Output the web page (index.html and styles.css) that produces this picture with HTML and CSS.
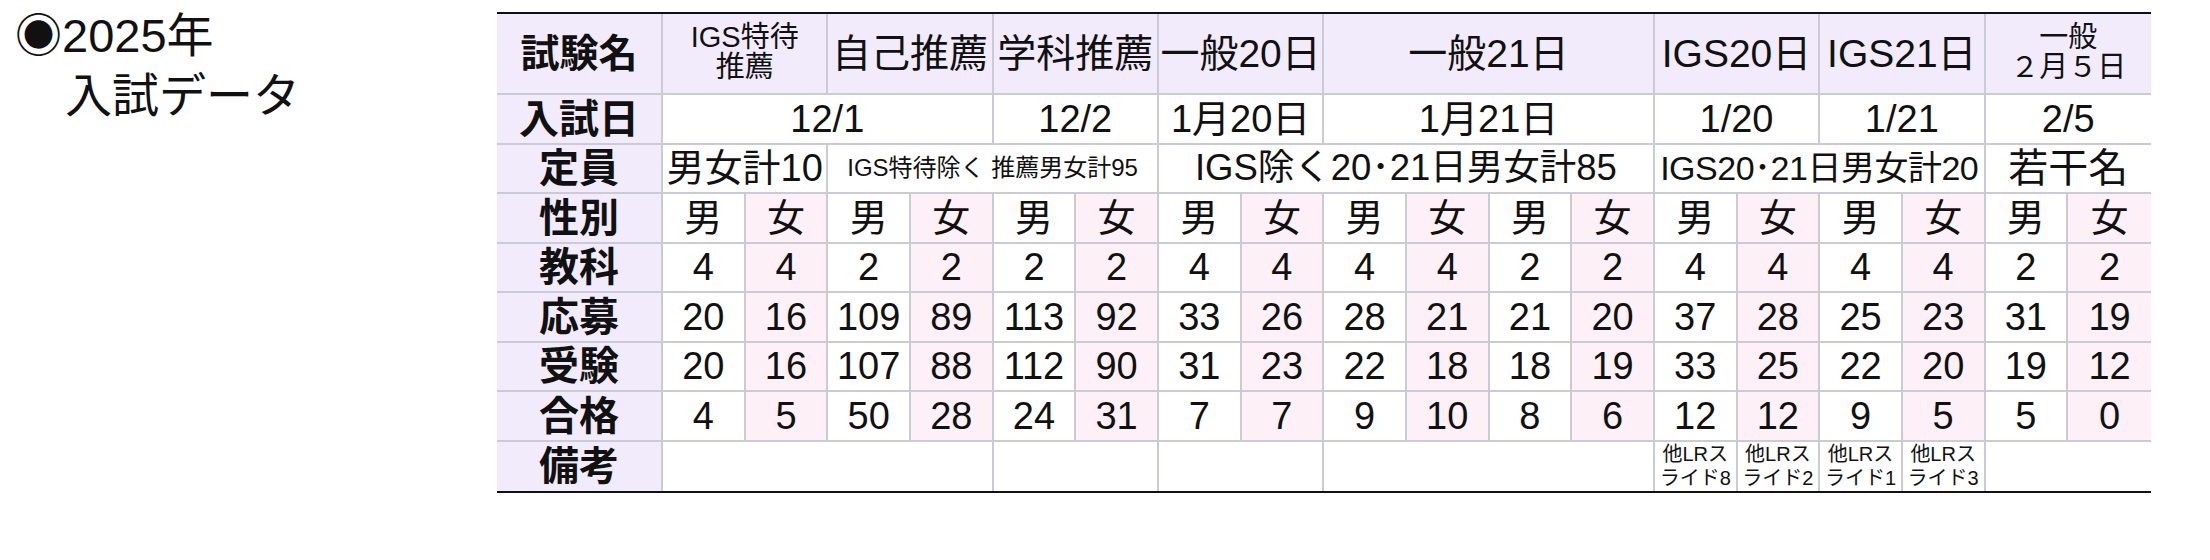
FILE: index.html
```html
<!DOCTYPE html>
<html lang="ja">
<head>
<meta charset="utf-8">
<title>2025年 入試データ</title>
<link rel="stylesheet" href="styles.css">
</head>
<body>
<div class="page">
  <div class="title">
    <div class="t1"><span class="mark">◉</span>2025年</div>
    <div class="t2">入試データ</div>
  </div>
  <table class="data">
    <colgroup>
      <col class="c-label">
      <col><col><col><col><col><col><col><col><col>
      <col><col><col><col><col><col><col><col><col>
    </colgroup>
    <tr class="hd">
      <th class="lb">試験名</th>
      <th colspan="2" class="sm">IGS特待<br>推薦</th>
      <th colspan="2">自己推薦</th>
      <th colspan="2">学科推薦</th>
      <th colspan="2">一般20日</th>
      <th colspan="4">一般21日</th>
      <th colspan="2">IGS20日</th>
      <th colspan="2">IGS21日</th>
      <th colspan="2" class="sm">一般<br>２月５日</th>
    </tr>
    <tr>
      <th class="lb">入試日</th>
      <td colspan="4">12/1</td>
      <td colspan="2">12/2</td>
      <td colspan="2">1月20日</td>
      <td colspan="4">1月21日</td>
      <td colspan="2">1/20</td>
      <td colspan="2">1/21</td>
      <td colspan="2">2/5</td>
    </tr>
    <tr>
      <th class="lb">定員</th>
      <td colspan="2">男女計10</td>
      <td colspan="4" class="tiny">IGS特待除く 推薦男女計95</td>
      <td colspan="6" class="nar1">IGS除く20･21日男女計85</td>
      <td colspan="4" class="nar2">IGS20･21日男女計20</td>
      <td colspan="2" class="wide">若干名</td>
    </tr>
    <tr>
      <th class="lb">性別</th>
      <td>男</td><td class="f">女</td><td>男</td><td class="f">女</td><td>男</td><td class="f">女</td>
      <td>男</td><td class="f">女</td><td>男</td><td class="f">女</td><td>男</td><td class="f">女</td>
      <td>男</td><td class="f">女</td><td>男</td><td class="f">女</td><td>男</td><td class="f">女</td>
    </tr>
    <tr>
      <th class="lb">教科</th>
      <td>4</td><td class="f">4</td><td>2</td><td class="f">2</td><td>2</td><td class="f">2</td>
      <td>4</td><td class="f">4</td><td>4</td><td class="f">4</td><td>2</td><td class="f">2</td>
      <td>4</td><td class="f">4</td><td>4</td><td class="f">4</td><td>2</td><td class="f">2</td>
    </tr>
    <tr>
      <th class="lb">応募</th>
      <td>20</td><td class="f">16</td><td>109</td><td class="f">89</td><td>113</td><td class="f">92</td>
      <td>33</td><td class="f">26</td><td>28</td><td class="f">21</td><td>21</td><td class="f">20</td>
      <td>37</td><td class="f">28</td><td>25</td><td class="f">23</td><td>31</td><td class="f">19</td>
    </tr>
    <tr>
      <th class="lb">受験</th>
      <td>20</td><td class="f">16</td><td>107</td><td class="f">88</td><td>112</td><td class="f">90</td>
      <td>31</td><td class="f">23</td><td>22</td><td class="f">18</td><td>18</td><td class="f">19</td>
      <td>33</td><td class="f">25</td><td>22</td><td class="f">20</td><td>19</td><td class="f">12</td>
    </tr>
    <tr>
      <th class="lb">合格</th>
      <td>4</td><td class="f">5</td><td>50</td><td class="f">28</td><td>24</td><td class="f">31</td>
      <td>7</td><td class="f">7</td><td>9</td><td class="f">10</td><td>8</td><td class="f">6</td>
      <td>12</td><td class="f">12</td><td>9</td><td class="f">5</td><td>5</td><td class="f">0</td>
    </tr>
    <tr class="last">
      <th class="lb">備考</th>
      <td colspan="4"></td>
      <td colspan="2"></td>
      <td colspan="2"></td>
      <td colspan="4"></td>
      <td class="note">他LRス<br>ライド8</td>
      <td class="note">他LRス<br>ライド2</td>
      <td class="note">他LRス<br>ライド1</td>
      <td class="note">他LRス<br>ライド3</td>
      <td colspan="2"></td>
    </tr>
  </table>
</div>
</body>
</html>
```
FILE: styles.css
```css
html, body {
  margin: 0;
  padding: 0;
  background: #ffffff;
}

body {
  font-family: "Liberation Sans", "Noto Sans CJK JP", sans-serif;
  color: #111111;
}

.page {
  display: flex;
  align-items: flex-start;
  padding-top: 12px;
}

.title {
  width: 497px;
  flex: none;
  box-sizing: border-box;
  padding-left: 15px;
  font-size: 47px;
  line-height: 60px;
  margin-top: -6px;
}

.title .t2 {
  padding-left: 50px;
}

.data {
  width: 1654px;
  table-layout: fixed;
  border-collapse: separate;
  border-spacing: 0;
  border-top: 2px solid #111111;
  border-bottom: 2px solid #111111;
  flex: none;
}

.c-label {
  width: 166px;
}

.data th,
.data td {
  padding: 0;
  text-align: center;
  vertical-align: middle;
  font-weight: normal;
  font-size: 38px;
  line-height: 44px;
  white-space: nowrap;
  border-right: 2px solid #cbcbd5;
  border-bottom: 2px solid #cbcbd5;
  background: #ffffff;
}

.data tr > :last-child {
  border-right: none;
}

.data tr.last > * {
  border-bottom: none;
}

.data tr {
  height: 49.5px;
}

.data tr.hd {
  height: 81px;
}

.data tr.hd th {
  background: #f1ebfb;
  font-size: 39px;
}

.data tr.hd th.sm {
  font-size: 29px;
  line-height: 30px;
  padding-bottom: 4px;
}

.data th.lb {
  background: #f1ebfb;
  font-weight: bold;
  font-size: 40px;
  line-height: 46px;
}

.data td.f {
  background: #fdf1f7;
}

.data td.tiny {
  font-size: 24px;
}

.data td.nar1 {
  font-size: 36.5px;
}

.data td.nar2 {
  font-size: 34px;
  letter-spacing: -0.5px;
}

.data td.wide {
  font-size: 40px;
}

.data td.note {
  font-size: 20px;
  line-height: 24px;
  vertical-align: bottom;
  padding-bottom: 1px;
}
```
